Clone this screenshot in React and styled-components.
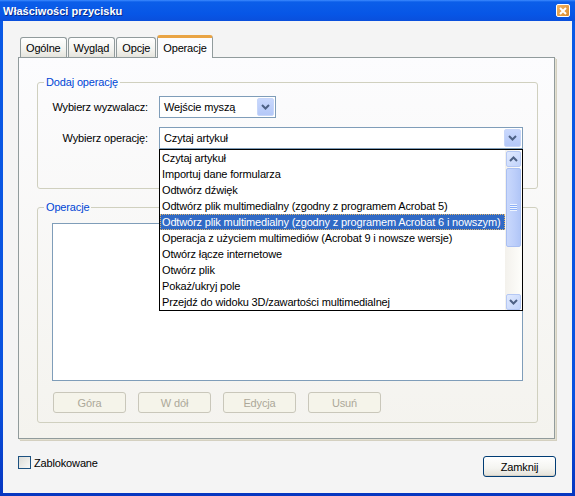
import React from 'react';
import styled, { createGlobalStyle } from 'styled-components';

const GlobalStyle = createGlobalStyle`
  html, body { margin: 0; padding: 0; }
  body {
    font-family: "Liberation Sans", Tahoma, Arial, sans-serif;
    font-size: 11px;
    letter-spacing: -0.15px;
    color: #000;
    background: #0a52df;
  }
  * { box-sizing: border-box; }
`;

const operations = [
  'Czytaj artykuł',
  'Importuj dane formularza',
  'Odtwórz dźwięk',
  'Odtwórz plik multimedialny (zgodny z programem Acrobat 5)',
  'Odtwórz plik multimedialny (zgodny z programem Acrobat 6 i nowszym)',
  'Operacja z użyciem multimediów (Acrobat 9 i nowsze wersje)',
  'Otwórz łącze internetowe',
  'Otwórz plik',
  'Pokaż/ukryj pole',
  'Przejdź do widoku 3D/zawartości multimedialnej',
];

const tabs = ['Ogólne', 'Wygląd', 'Opcje', 'Operacje'];

function Chevron({ up }) {
  return (
    <svg width="9" height="6" viewBox="0 0 9 6">
      <path
        d={up ? 'M1 5 L4.5 1.5 L8 5' : 'M1 1 L4.5 4.5 L8 1'}
        fill="none"
        stroke="#4d6185"
        strokeWidth="2"
      />
    </svg>
  );
}

function Combo({ value, width, children }) {
  return (
    <ComboBox $width={width}>
      <ComboText>{value}</ComboText>
      <ComboArrow><Chevron /></ComboArrow>
      {children}
    </ComboBox>
  );
}

export default function App() {
  return (
    <>
      <GlobalStyle />
      <Window>
        <TitleBar>
          <Title>Właściwości przycisku</Title>
          <CloseButton>
            <svg width="8" height="8" viewBox="0 0 8 8">
              <path d="M1 1 L7 7 M7 1 L1 7" stroke="#fff" strokeWidth="2" />
            </svg>
          </CloseButton>
        </TitleBar>

        <Client>
          <TabRow>
            {tabs.map((t, i) => (
              <Tab key={t} $active={i === 3}>{t}</Tab>
            ))}
          </TabRow>

          <Panel>
            <Group $pad="7px 0 39px 0">
              <Legend>Dodaj operację</Legend>
              <FormGrid>
                <Label>Wybierz wyzwalacz:</Label>
                <Combo value="Wejście myszą" width={117} />
                <Label>Wybierz operację:</Label>
                <Combo value="Czytaj artykuł" width={364}>
                  <DropList>
                    <Rows>
                      {operations.map((op, i) => (
                        <Row key={op} $selected={i === 4}>{op}</Row>
                      ))}
                    </Rows>
                    <ScrollBar>
                      <ScrollButton><Chevron up /></ScrollButton>
                      <Thumb>
                        <Grip />
                      </Thumb>
                      <Track />
                      <ScrollButton><Chevron /></ScrollButton>
                    </ScrollBar>
                  </DropList>
                </Combo>
              </FormGrid>
            </Group>

            <Group $pad="9px 0" $mt={11}>
              <Legend>Operacje</Legend>
              <GroupBody>
                <ListBox />
                <ButtonRow>
                  <DisabledButton>Góra</DisabledButton>
                  <DisabledButton>W dół</DisabledButton>
                  <DisabledButton>Edycja</DisabledButton>
                  <DisabledButton>Usuń</DisabledButton>
                </ButtonRow>
              </GroupBody>
            </Group>
          </Panel>

          <Footer>
            <CheckLabel>
              <CheckBox />
              Zablokowane
            </CheckLabel>
            <PushButton>Zamknij</PushButton>
          </Footer>
        </Client>
      </Window>
    </>
  );
}

const Window = styled.div`
  width: 575px;
  height: 496px;
  display: flex;
  flex-direction: column;
  background: linear-gradient(to bottom, #0a5ae6 0%, #0a52df 80%, #0636c0 100%);
`;

const TitleBar = styled.div`
  height: 21px;
  flex: none;
  display: flex;
  align-items: center;
  justify-content: space-between;
  padding: 0 5px 0 3px;
  background: linear-gradient(to bottom, #3d8bff 0px, #0b5ee9 2px, #0756e6 14px, #0a4fdc 21px);
`;

const Title = styled.div`
  color: #fff;
  font-weight: bold;
  font-size: 11px;
  letter-spacing: 0;
  text-shadow: 1px 1px 0 #0a2c8c;
`;

const CloseButton = styled.div`
  width: 14px;
  height: 13px;
  border: 1px solid #fff;
  border-radius: 2px;
  background: linear-gradient(135deg, #f3b563, #d98a2e);
  display: flex;
  align-items: center;
  justify-content: center;
`;

const Client = styled.div`
  flex: 1;
  margin: 0 3px 3px;
  background: #f4f4f4;
  padding: 14px 15px 0 15px;
  display: flex;
  flex-direction: column;
`;

const TabRow = styled.div`
  height: 22px;
  display: flex;
  align-items: flex-end;
  padding-left: 2px;
  position: relative;
  z-index: 1;
`;

const Tab = styled.div`
  height: ${p => (p.$active ? '23px' : '20px')};
  margin-bottom: ${p => (p.$active ? '-1px' : '0')};
  margin-right: ${p => (p.$active ? '0' : '1px')};
  padding: 0 5px;
  border: 1px solid #919b9c;
  border-bottom: none;
  border-top: ${p => (p.$active ? '3px solid #e9a444' : '1px solid #919b9c')};
  border-radius: 3px 3px 0 0;
  background: ${p => (p.$active ? '#fcfcfe' : 'linear-gradient(to bottom, #ffffff, #f3f3ef 60%, #e5e4dd)')};
  display: flex;
  align-items: center;
  white-space: nowrap;
  font-size: 11px;
`;

const Panel = styled.div`
  width: 537px;
  border: 1px solid #919b9c;
  box-shadow: 1px 1px 0 #e3e0d2, 2px 2px 0 #d4d0c0;
  background: linear-gradient(to bottom, #fcfcfe, #f4f3ee);
  padding: 17px 16px 15px 18px;
  flex: none;
`;

const Group = styled.fieldset`
  margin: ${p => p.$mt || 0}px 0 0 0;
  min-width: 0;
  border: 1px solid #d0d0bf;
  border-radius: 3px;
  padding: ${p => p.$pad};
`;

const Legend = styled.legend`
  color: #0046d5;
  padding: 0 2px;
  margin-left: 6px;
  line-height: 14px;
  font-size: 11px;
`;

const GroupBody = styled.div`
  padding: 0 14px;
`;

const FormGrid = styled.div`
  display: grid;
  grid-template-columns: 110px auto;
  column-gap: 11px;
  row-gap: 9px;
  justify-items: start;
  align-items: center;
`;

const Label = styled.div`
  justify-self: end;
  white-space: nowrap;
`;

const ComboBox = styled.div`
  position: relative;
  width: ${p => p.$width}px;
  height: 22px;
  background: #fff;
  border: 1px solid #7f9db9;
  display: flex;
  align-items: center;
`;

const ComboText = styled.div`
  flex: 1;
  padding-left: 4px;
  white-space: nowrap;
`;

const ComboArrow = styled.div`
  width: 17px;
  height: 18px;
  margin-right: 1px;
  border: 1px solid #c7d6f9;
  border-radius: 2px;
  background: linear-gradient(to bottom, #c9d8fd, #b4c8f8);
  display: flex;
  align-items: center;
  justify-content: center;
`;

const DropList = styled.div`
  position: absolute;
  top: 21px;
  left: -1px;
  width: 364px;
  height: 162px;
  border: 1px solid #000;
  background: #fff;
  display: flex;
  z-index: 10;
`;

const Rows = styled.div`
  flex: 1;
  display: flex;
  flex-direction: column;
`;

const Row = styled.div`
  height: 16px;
  line-height: 16px;
  padding-left: 2px;
  white-space: nowrap;
  overflow: hidden;
  color: ${p => (p.$selected ? '#fff' : '#000')};
  background: ${p => (p.$selected ? '#316ac5' : 'transparent')};
  outline: ${p => (p.$selected ? '1px dotted #e2b56b' : 'none')};
  outline-offset: -1px;
`;

const ScrollBar = styled.div`
  width: 17px;
  display: flex;
  flex-direction: column;
  background: linear-gradient(to right, #f3f1ec, #fefefb);
  padding: 1px 0 0 1px;
`;

const ScrollButton = styled.div`
  width: 15px;
  height: 16px;
  border: 1px solid #b5c8f4;
  border-radius: 2px;
  background: linear-gradient(to bottom right, #e1eafe, #c1d3fb);
  display: flex;
  align-items: center;
  justify-content: center;
  flex: none;
`;

const Thumb = styled.div`
  width: 15px;
  height: 79px;
  margin-top: 1px;
  border: 1px solid #a9bff2;
  border-radius: 2px;
  background: linear-gradient(to right, #c9d8fc, #bccefa 60%, #b1c6f7);
  display: flex;
  align-items: center;
  justify-content: center;
  flex: none;
`;

const Grip = styled.div`
  width: 7px;
  height: 7px;
  background: repeating-linear-gradient(to bottom, #eef4fe 0, #eef4fe 1px, #8cb0f8 1px, #8cb0f8 2px);
`;

const Track = styled.div`
  flex: 1;
`;

const ListBox = styled.div`
  height: 158px;
  background: #fff;
  border: 1px solid #7f9db9;
`;

const ButtonRow = styled.div`
  display: flex;
  gap: 12px;
  margin-top: 11px;
  padding-left: 1px;
`;

const DisabledButton = styled.div`
  width: 73px;
  height: 21px;
  border: 1px solid #c9c7ba;
  border-radius: 3px;
  background: #f5f4ea;
  color: #aca899;
  display: flex;
  align-items: center;
  justify-content: center;
`;

const Footer = styled.div`
  margin-top: 17px;
  display: flex;
  justify-content: space-between;
  align-items: flex-start;
  padding-right: 1px;
`;

const CheckLabel = styled.label`
  display: flex;
  align-items: center;
  gap: 3px;
  height: 13px;
`;

const CheckBox = styled.span`
  width: 13px;
  height: 13px;
  border: 1px solid #1c5180;
  background: linear-gradient(135deg, #dcdcd7, #f8f8f6);
`;

const PushButton = styled.div`
  width: 73px;
  height: 21px;
  border: 1px solid #003c74;
  border-radius: 3px;
  background: linear-gradient(to bottom, #ffffff, #f4f4f0 60%, #e3e1d8);
  box-shadow: inset 0 -1px 0 #d6d0c5;
  display: flex;
  align-items: center;
  justify-content: center;
`;
